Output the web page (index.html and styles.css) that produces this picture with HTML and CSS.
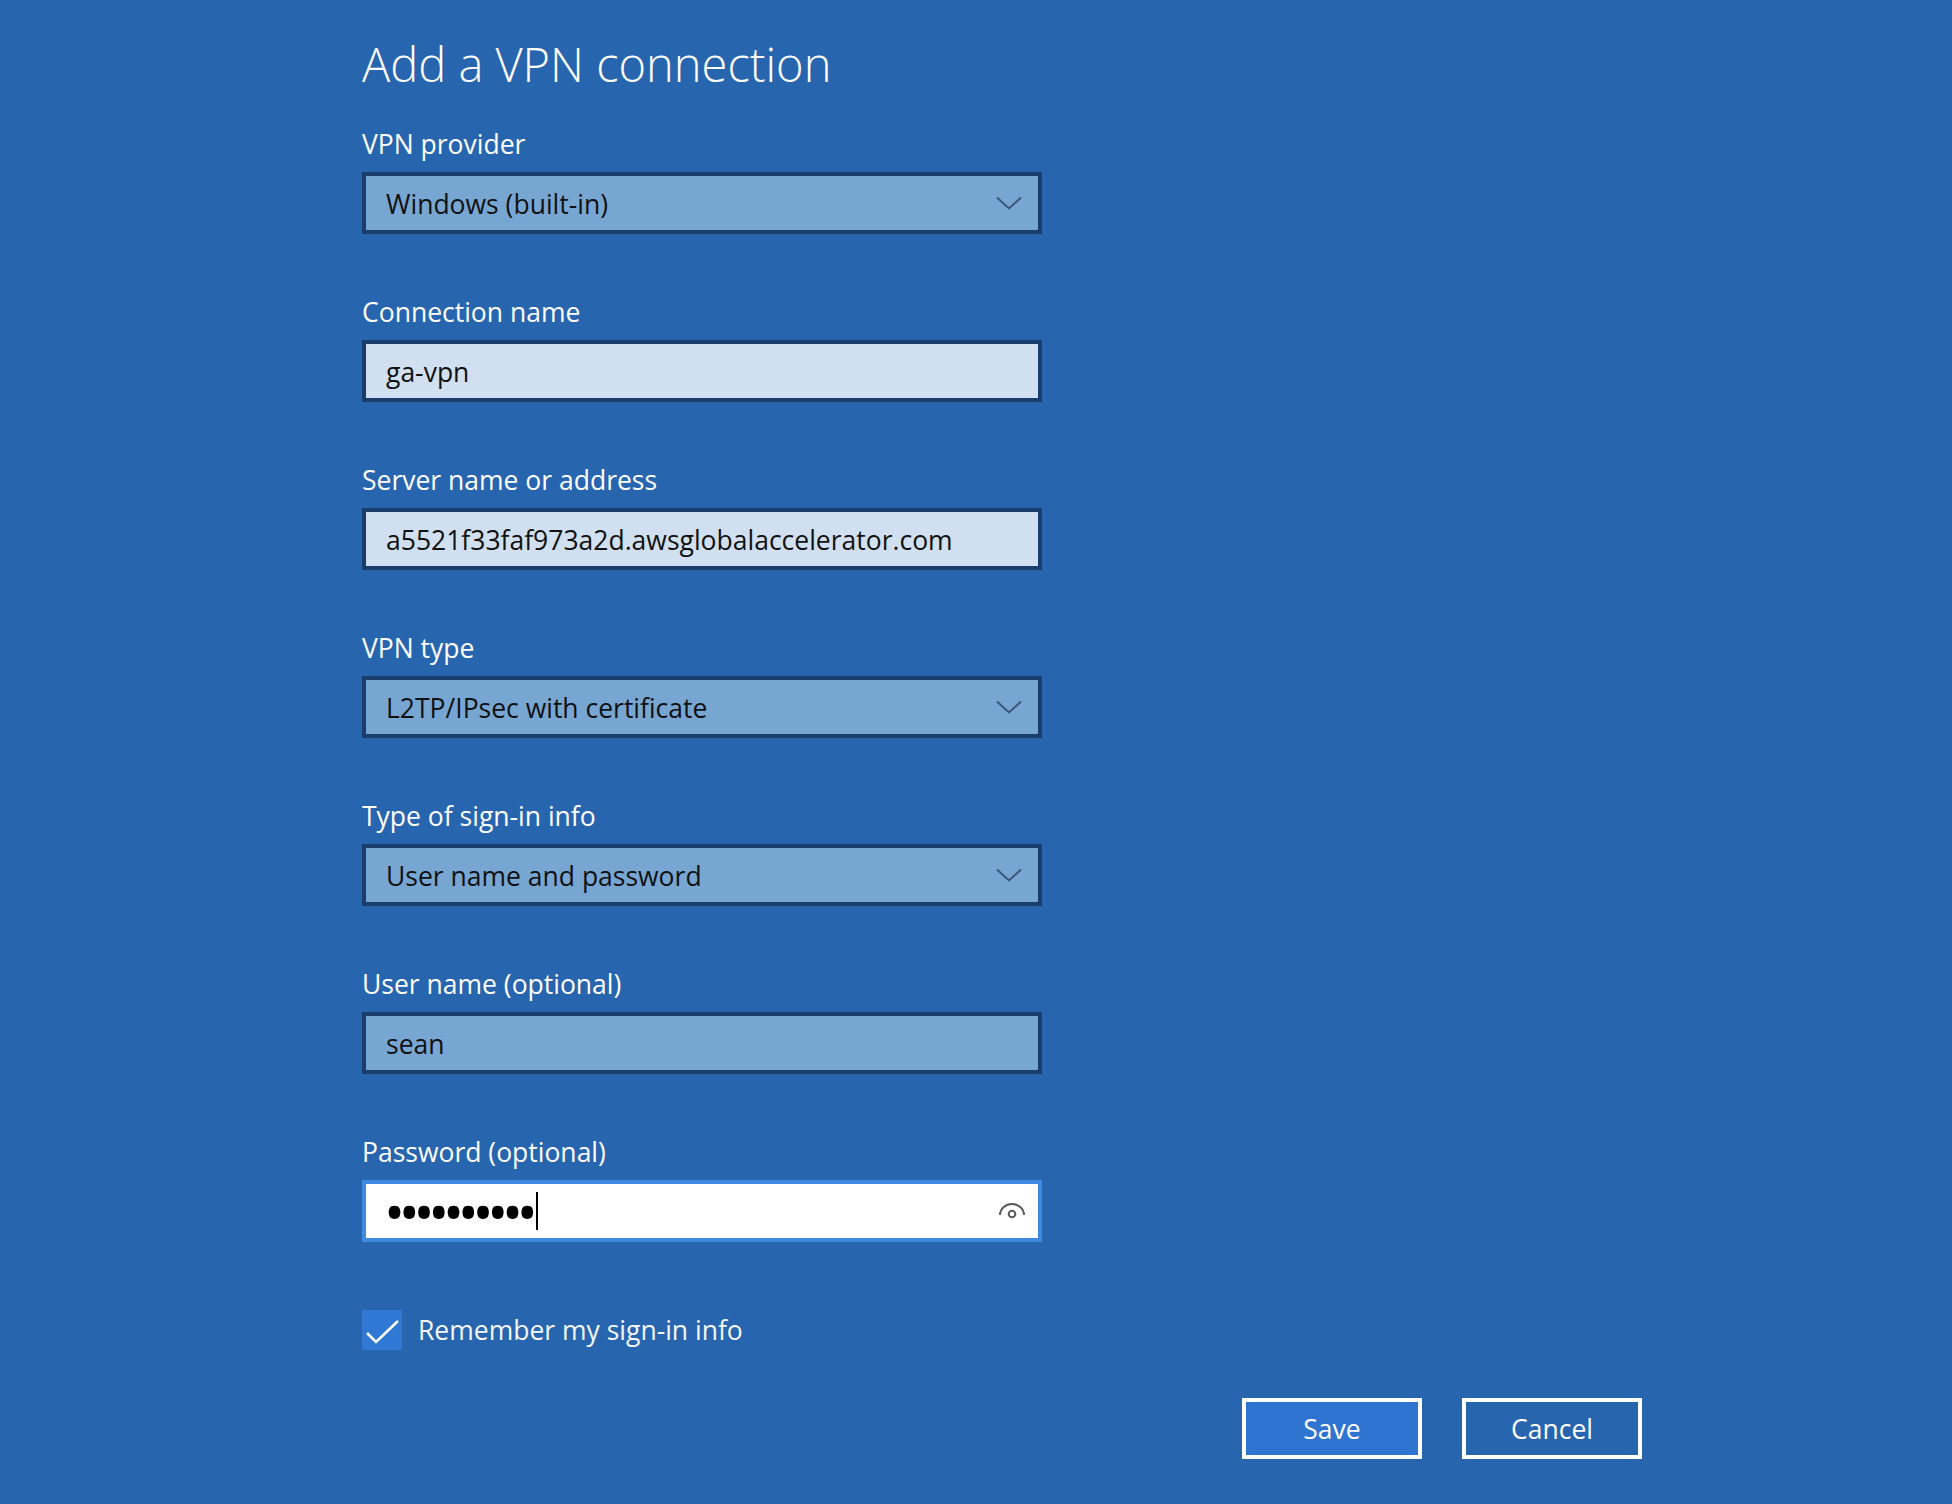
FILE: index.html
```html
<!DOCTYPE html>
<html lang="en">
<head>
<meta charset="utf-8">
<title>Add a VPN connection</title>
<link rel="stylesheet" href="styles.css">
</head>
<body>
<div class="page">
  <h1 class="title">Add a VPN connection</h1>

  <div class="group">
    <div class="label">VPN provider</div>
    <div class="field select">
      <span class="value">Windows (built-in)</span>
      <svg class="chevron" width="26" height="14" viewBox="0 0 26 14"><polyline points="1,1.5 13,12.5 25,1.5" fill="none" stroke="#3b5575" stroke-width="2"/></svg>
    </div>
  </div>

  <div class="group">
    <div class="label">Connection name</div>
    <div class="field text">
      <span class="value">ga-vpn</span>
    </div>
  </div>

  <div class="group">
    <div class="label">Server name or address</div>
    <div class="field text">
      <span class="value">a5521f33faf973a2d.awsglobalaccelerator.com</span>
    </div>
  </div>

  <div class="group">
    <div class="label">VPN type</div>
    <div class="field select">
      <span class="value">L2TP/IPsec with certificate</span>
      <svg class="chevron" width="26" height="14" viewBox="0 0 26 14"><polyline points="1,1.5 13,12.5 25,1.5" fill="none" stroke="#3b5575" stroke-width="2"/></svg>
    </div>
  </div>

  <div class="group">
    <div class="label">Type of sign-in info</div>
    <div class="field select">
      <span class="value">User name and password</span>
      <svg class="chevron" width="26" height="14" viewBox="0 0 26 14"><polyline points="1,1.5 13,12.5 25,1.5" fill="none" stroke="#3b5575" stroke-width="2"/></svg>
    </div>
  </div>

  <div class="group">
    <div class="label">User name (optional)</div>
    <div class="field hover">
      <span class="value">sean</span>
    </div>
  </div>

  <div class="group last">
    <div class="label">Password (optional)</div>
    <div class="field focus">
      <span class="pw"><span class="dots">••••••••••</span><span class="caret"></span></span>
      <svg class="eye" width="28" height="18" viewBox="0 0 28 18"><path d="M2,14 A12,11 0 0 1 26,14" fill="none" stroke="#5a5a5a" stroke-width="2"/><circle cx="14" cy="13" r="3.3" fill="none" stroke="#5a5a5a" stroke-width="2"/></svg>
    </div>
  </div>

  <div class="check-row">
    <span class="checkbox"><svg width="40" height="40" viewBox="0 0 40 40"><polyline points="5,23 14,32 36,11" fill="none" stroke="#ffffff" stroke-width="2.6"/></svg></span>
    <span class="check-label">Remember my sign-in info</span>
  </div>

  <div class="buttons">
    <div class="btn primary">Save</div>
    <div class="btn">Cancel</div>
  </div>
</div>
</body>
</html>
```

FILE: styles.css
```css
html, body {
  margin: 0;
  padding: 0;
}
body {
  background: #2765af;
  width: 1952px;
  height: 1504px;
  overflow: hidden;
  font-family: "Open Sans", "Noto Sans", sans-serif;
  color: #ffffff;
}
.page {
  padding: 34px 0 0 362px;
  width: 1280px;
}
.title {
  margin: 0 0 32px 0;
  font-size: 47px;
  line-height: 60px;
  height: 60px;
  font-weight: 300;
  color: #ffffff;
  letter-spacing: 0;
}
.group {
  margin-bottom: 60px;
}
.group.last {
  margin-bottom: 68px;
}
.label {
  font-size: 26.5px;
  line-height: 36px;
  height: 36px;
  margin-bottom: 10px;
  color: #ffffff;
}
.field {
  box-sizing: border-box;
  width: 680px;
  height: 62px;
  border: 4px solid #1a3d6b;
  background: #78a6d2;
  display: flex;
  align-items: center;
  justify-content: space-between;
  padding: 0 16px 0 20px;
  color: #111111;
  font-size: 26.5px;
}
.field.text {
  background: #d1e0f0;
}
.field.hover {
  background: #78a6d2;
}
.field.focus {
  background: #ffffff;
  border-color: #3d8ae0;
  padding-right: 12px;
}
.value {
  line-height: 36px;
  position: relative;
  top: 1px;
}
.chevron {
  display: block;
}
.pw {
  display: flex;
  align-items: center;
}
.dots {
  font-size: 56px;
  line-height: 56px;
  letter-spacing: -6.3px;
  margin-left: -2px;
  color: #000000;
}
.caret {
  display: block;
  width: 2px;
  height: 38px;
  background: #000000;
  margin-left: 4px;
}
.eye {
  display: block;
  position: relative;
  top: -1px;
}
.check-row {
  display: flex;
  align-items: center;
  height: 40px;
  margin-bottom: 48px;
}
.checkbox {
  display: block;
  width: 40px;
  height: 40px;
  background: #2f78d4;
}
.checkbox svg {
  display: block;
}
.check-label {
  margin-left: 16px;
  font-size: 26.5px;
  line-height: 36px;
  color: #f2f6fb;
}
.buttons {
  display: flex;
  justify-content: flex-end;
  gap: 40px;
}
.btn {
  box-sizing: border-box;
  width: 180px;
  height: 61px;
  border: 4px solid #ffffff;
  display: flex;
  align-items: center;
  justify-content: center;
  font-size: 26.5px;
  color: #ffffff;
}
.btn.primary {
  background: #2e74d0;
}
```
